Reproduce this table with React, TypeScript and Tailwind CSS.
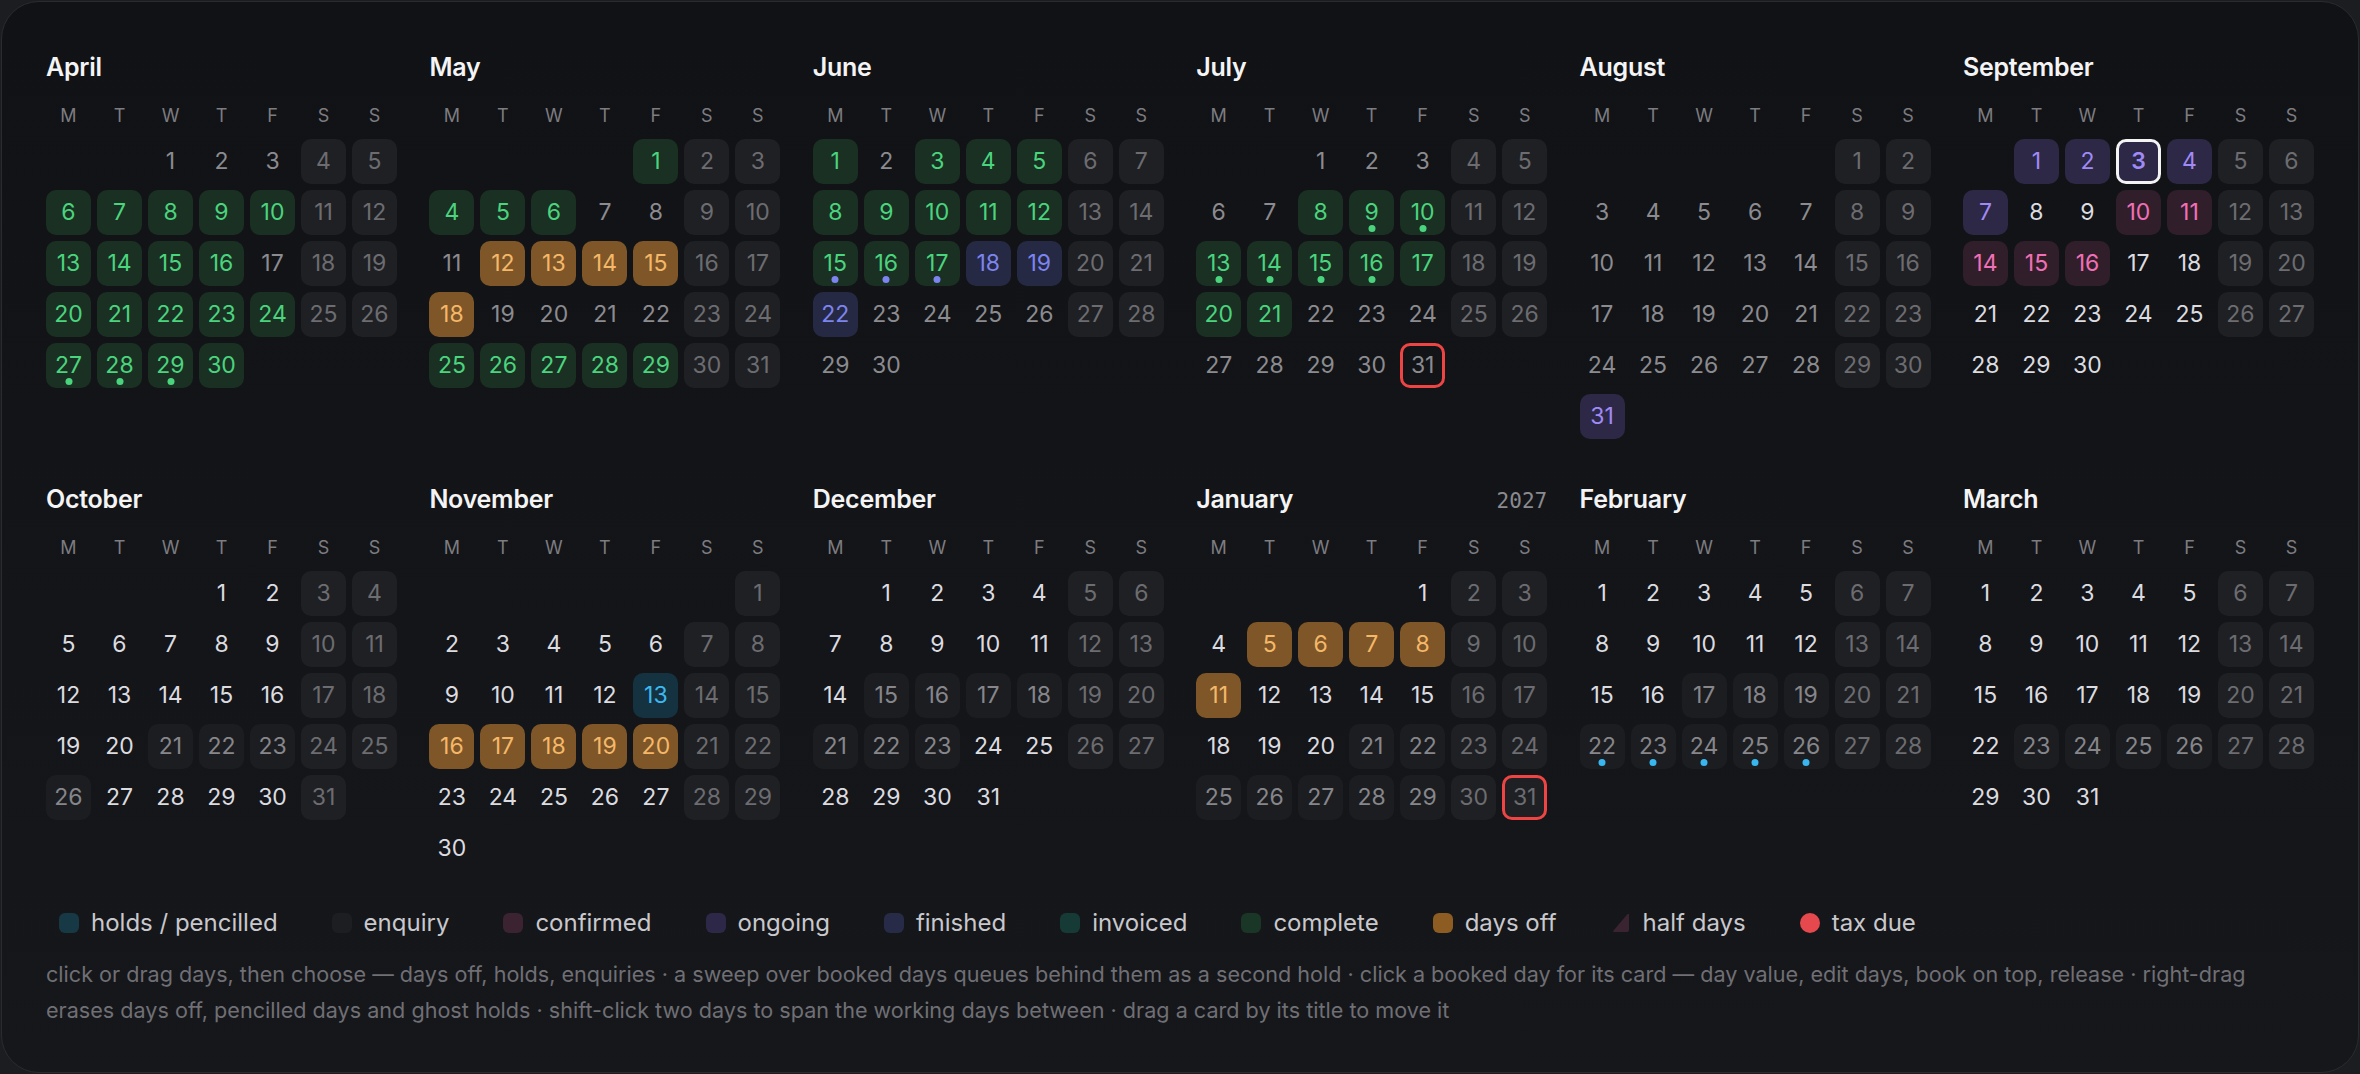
/**
 * YearPlanner — twelve-month booking calendar with status legend.
 */
type Status = "complete" | "off" | "ongoing" | "finished" | "confirmed" | "hold" | "enquiry";
type DotColor = "green" | "indigo" | "sky";

interface MonthSpec {
  name: string;
  year: number;
  month: number; // 0-based
  showYear?: boolean;
  marks: Partial<Record<Status, number[]>>;
  dots?: Partial<Record<DotColor, number[]>>;
  tax?: number[];
}

const TODAY = new Date(2026, 8, 3);
const WEEKDAYS = ["M", "T", "W", "T", "F", "S", "S"];

const range = (a: number, b: number) => Array.from({ length: b - a + 1 }, (_, i) => a + i);

const MONTHS: MonthSpec[] = [
  {
    name: "April", year: 2026, month: 3,
    marks: { complete: [...range(6, 10), ...range(13, 16), ...range(20, 24), ...range(27, 30)] },
    dots: { green: [27, 28, 29] },
  },
  {
    name: "May", year: 2026, month: 4,
    marks: { complete: [1, 4, 5, 6, ...range(25, 29)], off: [12, 13, 14, 15, 18] },
  },
  {
    name: "June", year: 2026, month: 5,
    marks: { complete: [1, 3, 4, 5, ...range(8, 12), 15, 16, 17], finished: [18, 19, 22] },
    dots: { indigo: [15, 16, 17] },
  },
  {
    name: "July", year: 2026, month: 6,
    marks: { complete: [8, 9, 10, ...range(13, 17), 20, 21] },
    dots: { green: [9, 10, 13, 14, 15, 16] },
    tax: [31],
  },
  {
    name: "August", year: 2026, month: 7,
    marks: { ongoing: [31] },
  },
  {
    name: "September", year: 2026, month: 8,
    marks: { ongoing: [1, 2, 3, 4, 7], confirmed: [10, 11, 14, 15, 16] },
  },
  {
    name: "October", year: 2026, month: 9,
    marks: { enquiry: [21, 22, 23, 26] },
  },
  {
    name: "November", year: 2026, month: 10,
    marks: { hold: [13], off: range(16, 20) },
  },
  {
    name: "December", year: 2026, month: 11,
    marks: { enquiry: [15, 16, 17, 18, 21, 22, 23] },
  },
  {
    name: "January", year: 2027, month: 0, showYear: true,
    marks: { off: [5, 6, 7, 8, 11], enquiry: [21, 22, 25, 26, 27, 28, 29] },
    tax: [31],
  },
  {
    name: "February", year: 2027, month: 1,
    marks: { enquiry: [17, 18, 19, ...range(22, 26)] },
    dots: { sky: range(22, 26) },
  },
  {
    name: "March", year: 2027, month: 2,
    marks: { enquiry: [23, 24, 25, 26] },
  },
];

const STATUS_STYLES: Record<Status, string> = {
  complete:  "bg-[#1a3022] text-[#4ad47e]",
  off:       "bg-[#7e5628] text-[#f4b868]",
  ongoing:   "bg-[#2c2846] text-[#a08af6]",
  finished:  "bg-[#262943] text-[#7c84f0]",
  confirmed: "bg-[#311e2b] text-[#f070b6]",
  hold:      "bg-[#143240] text-[#3cb8f0]",
  enquiry:   "bg-[#1c1d20] text-[#86868b]",
};

const DOT_STYLES: Record<DotColor, string> = {
  green:  "bg-[#4ad47e]",
  indigo: "bg-[#7c84f0]",
  sky:    "bg-[#38b6ef]",
};

const LEGEND: { label: string; swatch: string; shape?: "tri" | "circle" }[] = [
  { label: "holds / pencilled", swatch: "bg-[#173845]" },
  { label: "enquiry",           swatch: "bg-[#1d1e22]" },
  { label: "confirmed",         swatch: "bg-[#3b2332]" },
  { label: "ongoing",           swatch: "bg-[#2d2847]" },
  { label: "finished",          swatch: "bg-[#272b47]" },
  { label: "invoiced",          swatch: "bg-[#163b37]" },
  { label: "complete",          swatch: "bg-[#1a3626]" },
  { label: "days off",          swatch: "bg-[#8c5c22]" },
  { label: "half days",         swatch: "", shape: "tri" },
  { label: "tax due",           swatch: "bg-[#e5484d]", shape: "circle" },
];

function DayCell({ spec, day }: { spec: MonthSpec; day: number }) {
  const date = new Date(spec.year, spec.month, day);
  const weekend = (date.getDay() + 6) % 7 >= 5;
  const past = date < TODAY;
  const isToday = date.getTime() === TODAY.getTime();
  const status = (Object.keys(spec.marks) as Status[]).find(s => spec.marks[s]!.includes(day));
  const dot = spec.dots && (Object.keys(spec.dots) as DotColor[]).find(d => spec.dots![d]!.includes(day));
  const tax = spec.tax?.includes(day);

  let tone = past ? "text-[#8b8b90]" : "text-[#dcdce0]";
  if (status) tone = STATUS_STYLES[status];
  else if (weekend) tone = "bg-[#1f2023] text-[#6c6c71]";

  const outline = isToday
    ? "border-[3px] border-[#f4f4f5]"
    : tax
    ? "border-[3px] border-[#ef4444]"
    : "";

  return (
    <div className={`relative h-[45px] rounded-[10px] flex items-center justify-center text-[23px] leading-none ${tone} ${outline} ${isToday ? "font-semibold" : ""}`}>
      {day}
      {dot && (
        <span className={`absolute bottom-[3px] left-1/2 -translate-x-1/2 w-[7px] h-[7px] rounded-full ${DOT_STYLES[dot]}`} />
      )}
    </div>
  );
}

function Month({ spec }: { spec: MonthSpec }) {
  const lead = (new Date(spec.year, spec.month, 1).getDay() + 6) % 7;
  const count = new Date(spec.year, spec.month + 1, 0).getDate();

  return (
    <div className="w-[351px]">
      <div className="h-[32px] flex items-baseline justify-between">
        <span className="text-[25px] leading-[32px] font-semibold text-[#f4f4f5] tracking-[-0.01em]">{spec.name}</span>
        {spec.showYear && (
          <span className="text-[21px] leading-[32px] text-[#8a8a8f] font-['DejaVu_Sans_Mono',monospace]">{spec.year}</span>
        )}
      </div>
      <div className="mt-[22px] grid grid-cols-7 gap-x-[6px] h-[22px]">
        {WEEKDAYS.map((w, i) => (
          <span key={i} className="text-center text-[18px] leading-[22px] text-[#7c7c81]">{w}</span>
        ))}
      </div>
      <div className="mt-[12px] grid grid-cols-7 gap-[6px]">
        {Array.from({ length: lead }, (_, i) => <div key={`e${i}`} className="h-[45px]" />)}
        {range(1, count).map(d => <DayCell key={d} spec={spec} day={d} />)}
      </div>
    </div>
  );
}

function Swatch({ item }: { item: (typeof LEGEND)[number] }) {
  if (item.shape === "tri") {
    return (
      <svg width="20" height="20" viewBox="0 0 20 20" className="shrink-0">
        <path d="M18 1 L18 17 Q18 19 16 19 L3 19 Q1.5 19 2.5 17.5 L16 1.8 Q18 0 18 1 Z" fill="#3b2432" />
      </svg>
    );
  }
  return <span className={`w-[20px] h-[20px] shrink-0 ${item.shape === "circle" ? "rounded-full" : "rounded-[6px]"} ${item.swatch}`} />;
}

export default function App() {
  return (
    <div className="w-[2360px] h-[1074px] p-px bg-[#1c1d20] font-['Inter','Noto_Sans',sans-serif]">
      <div className="h-full rounded-[38px] border border-[#2a2b2f] bg-gradient-to-b from-[#111215] to-[#16171a] px-[44px] pt-[49px]">
        {/* Year grid */}
        <div className="grid grid-cols-[repeat(6,351px)] justify-between gap-y-[44px]">
          {MONTHS.map(m => <Month key={`${m.year}-${m.month}`} spec={m} />)}
        </div>

        {/* Legend */}
        <div className="mt-[41px] pl-[13px] flex items-center gap-x-[54px] h-[22px]">
          {LEGEND.map(item => (
            <div key={item.label} className="flex items-center gap-[12px]">
              <Swatch item={item} />
              <span className="text-[24px] leading-[22px] text-[#c8c8cd]">{item.label}</span>
            </div>
          ))}
        </div>

        {/* Help */}
        <p className="mt-[22px] text-[21.6px] leading-[36px] text-[#6f6f75]">
          click or drag days, then choose — days off, holds, enquiries · a sweep over booked days queues behind them as a second hold · click a booked day for its card — day value, edit days, book on top, release · right-drag erases days off, pencilled days and ghost holds · shift-click two days to span the working days between · drag a card by its title to move it
        </p>
      </div>
    </div>
  );
}
